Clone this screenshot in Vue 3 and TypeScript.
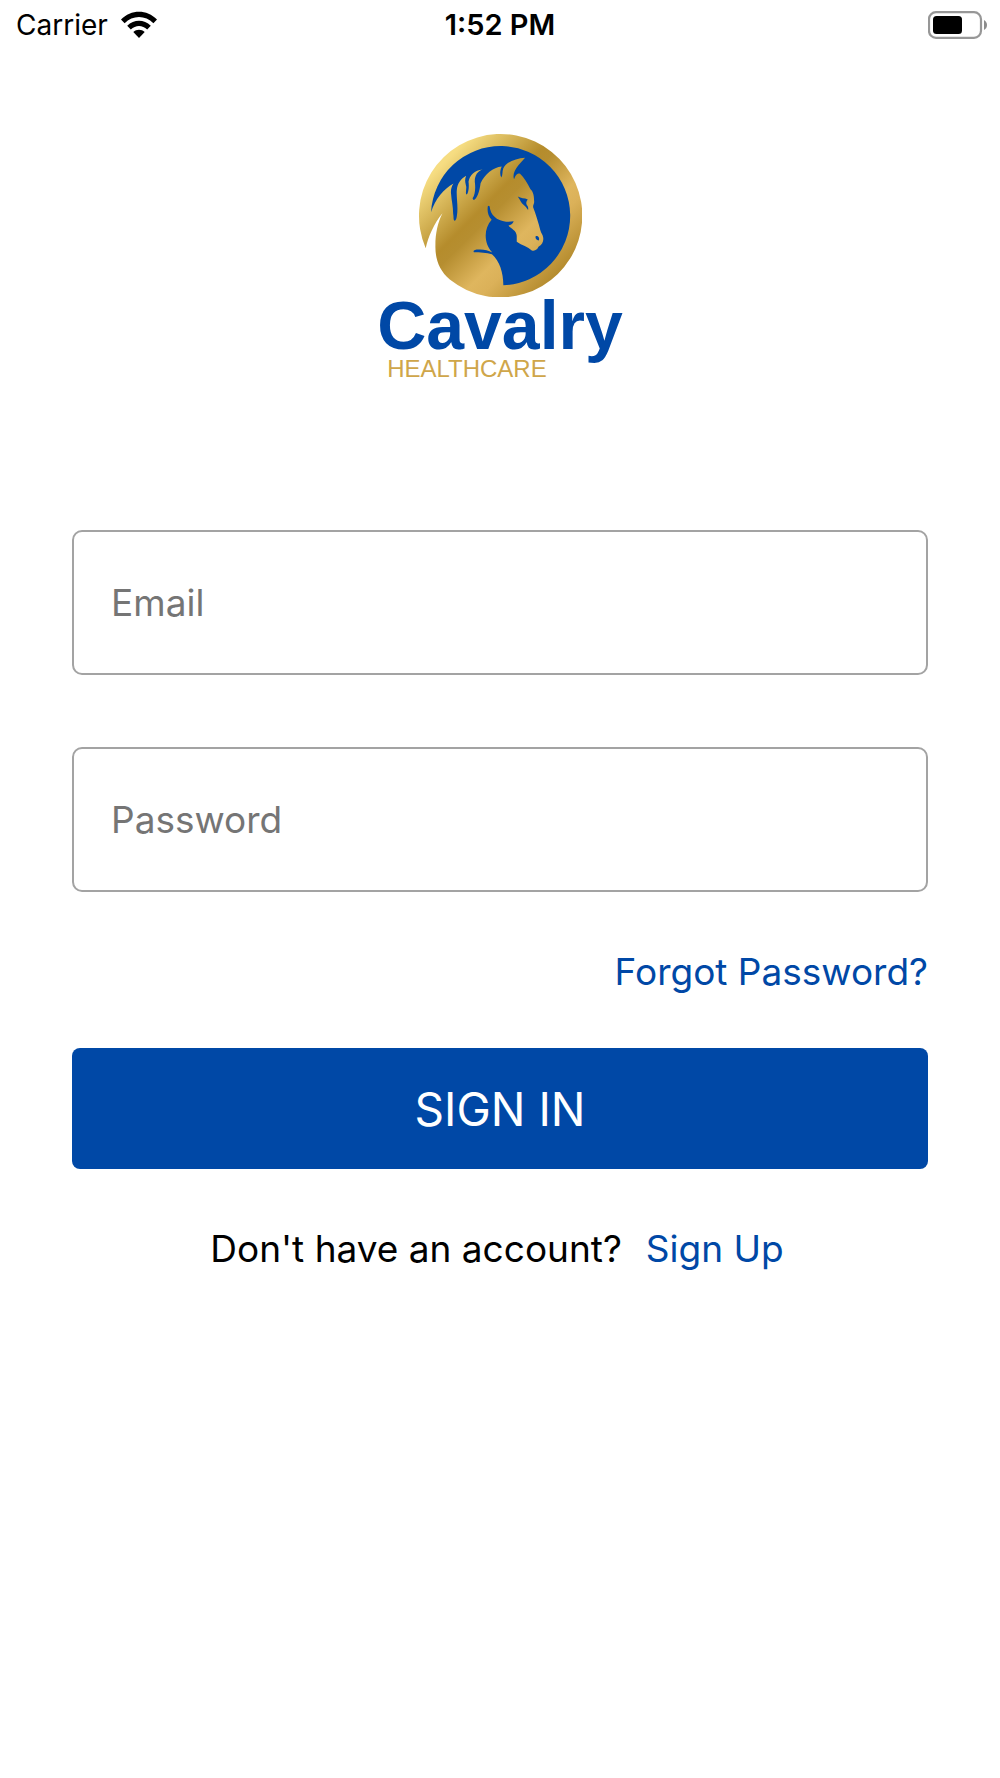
<script setup lang="ts">
import { ref } from 'vue'

const email = ref('')
const password = ref('')
</script>

<template>
  <div class="screen">
    <header class="status">
      <div class="carrier">
        <span>Carrier</span>
        <svg class="wifi" viewBox="0 0 38 28" aria-hidden="true">
          <path d="M1 8.6C11-2 27-2 37 8.6L33.400 12.200C25.400 4 12.600 4 4.600 12.200Z" />
          <path d="M7.200 14.800C14 8 24 8 30.800 14.800L27.200 18.400C22.400 13.700 15.600 13.700 10.800 18.400Z" />
          <path d="M13.300 21C16.600 18.100 21.400 18.100 24.700 21L19 27Z" />
        </svg>
      </div>
      <time class="clock">1:52 PM</time>
      <svg class="battery" viewBox="0 0 60 28" aria-hidden="true">
        <rect x="1" y="1.200" width="52" height="25.600" rx="7" fill="none" stroke="#979797" stroke-width="2.200" />
        <rect x="5" y="5" width="29" height="18" rx="3.500" fill="#000" />
        <path d="M56 9C60 11 60 17 56 19Z" fill="#8c8c8c" />
      </svg>
    </header>

    <main class="content">
      <div class="brand">
        <svg class="emblem" viewBox="175 40 490 490" aria-hidden="true">
          <defs>
            <linearGradient id="gold" gradientUnits="userSpaceOnUse" x1="190" y1="190" x2="530" y2="530">
              <stop offset="0" stop-color="#f6dd82" />
              <stop offset="0.370" stop-color="#b58c2c" />
              <stop offset="0.440" stop-color="#b68e30" />
              <stop offset="0.660" stop-color="#dfb65e" />
              <stop offset="0.750" stop-color="#dbb159" />
              <stop offset="1" stop-color="#b38a2c" />
            </linearGradient>
          </defs>
          <path
            fill="url(#gold)"
            d="M198 384A244 244 0 1 1 270 478C238 450 226 416 227 376C227 340 234 308 248 280C222 312 206 350 198 384Z"
          />
          <path
            fill="#0048a6"
            d="M214 277A208 208 0 1 1 430 495C430 456 419 423 396 402C380 397 360 396 342 396C338 391 346 388 356 388C371 387 385 391 397 397C372 372 370 326 395 299C384 289 381 272 384 257L389 259C391 285 410 302 438 305C446 306 454 305 461 304C458 312 452 316 445 316C453 326 471 331 470 349L470 365C486 376 503 380 515 391C525 393 531 389 535 380C546 374 551 364 549 352C548 344 543 339 541 332C535 309 526 280 519 262C518 255 523 250 522 245C522 230 520 216 511 208C502 190 491 172 480 162C472 158 467 164 462 178C457 166 464 149 475 136L495 114C468 116 440 126 430 145C426 155 429 165 424 173C419 164 420 152 425 140C400 142 374 163 362 190C359 215 351 238 341 240L338 235C346 225 347 204 345 189C343 171 351 154 368 149C344 151 329 167 326 186C328 200 326 220 320 224C315 218 322 206 318 195C315 185 315 177 319 168C303 177 293 190 291 210C289 230 296 263 291 289C290 296 288 302 285 302C280 302 282 290 280 281C280 260 275 241 274 224C272 211 275 200 281 191C252 207 226 238 214 277Z"
          />
          <path fill="#0048a6" d="M473 230C483 236 493 234 503 239C499 244 497 249 500 255C504 259 505 264 504 270C499 263 496 258 491 255C482 249 481 240 473 230Z" />
          <path fill="#0048a6" d="M527 348C534 347 539 353 536 361C529 361 524 354 527 348Z" />
        </svg>
        <div class="wordmark">
          <span class="name">Cavalry</span>
          <span class="sector">HEALTHCARE</span>
        </div>
      </div>

      <form class="form" @submit.prevent>
        <input v-model="email" class="field" type="email" name="email" placeholder="Email" aria-label="Email" />
        <input
          v-model="password"
          class="field"
          type="password"
          name="password"
          placeholder="Password"
          aria-label="Password"
        />
        <a class="link forgot" href="#forgot">Forgot Password?</a>
        <button class="submit" type="submit">SIGN IN</button>
      </form>

      <p class="signup">
        <span>Don't have an account?</span>
        <a class="link" href="#signup">Sign Up</a>
      </p>
    </main>
  </div>
</template>

<style>
body {
  margin: 0;
  background: #fff;
}
</style>

<style scoped>
.screen {
  min-height: 100vh;
  background: #fff;
  color: #000;
  font-family: Inter, "Liberation Sans", sans-serif;
  font-size: 37px;
  line-height: 48px;
}

.status {
  display: grid;
  grid-template-columns: 1fr auto 1fr;
  align-items: center;
  height: 50px;
  padding: 0 12px;
  font-size: 28px;
}

.carrier {
  display: flex;
  align-items: center;
  gap: 12px;
  padding-left: 4px;
}

.wifi {
  width: 38px;
  height: 28px;
}

.clock {
  font-size: 29px;
  font-weight: 600;
}

.battery {
  justify-self: end;
  width: 60px;
  height: 28px;
}

.content {
  padding: 83px 72px 0;
}

.brand {
  display: flex;
  flex-direction: column;
  align-items: center;
}

.emblem {
  width: 164px;
  height: 164px;
}

.wordmark {
  display: flex;
  flex-direction: column;
  font-family: "Liberation Sans", Arial, sans-serif;
}

.name {
  color: #0048a6;
  font-size: 68px;
  font-weight: 700;
  line-height: 56px;
}

.sector {
  margin-top: 4px;
  padding-left: 10px;
  color: #cfa64a;
  font-size: 24px;
  line-height: 24px;
}

.form {
  display: flex;
  flex-direction: column;
  margin-top: 149px;
}

.field {
  box-sizing: border-box;
  width: 100%;
  height: 145px;
  margin: 0 0 72px;
  padding: 0 37px;
  border: 2px solid #a3a3a3;
  border-radius: 10px;
  background: #fff;
  color: #000;
  font: inherit;
}

.field::placeholder {
  color: #757575;
  opacity: 1;
}

.link {
  color: #0048a6;
  text-decoration: none;
}

.forgot {
  align-self: flex-end;
  margin-top: -16px;
}

.submit {
  height: 121px;
  margin-top: 52px;
  border: 0;
  border-radius: 8px;
  background: #0048a6;
  color: #fff;
  font: inherit;
  font-size: 46px;
}

.signup {
  display: flex;
  justify-content: center;
  gap: 24px;
  margin: 56px 0 0;
  padding-right: 6px;
}
</style>
